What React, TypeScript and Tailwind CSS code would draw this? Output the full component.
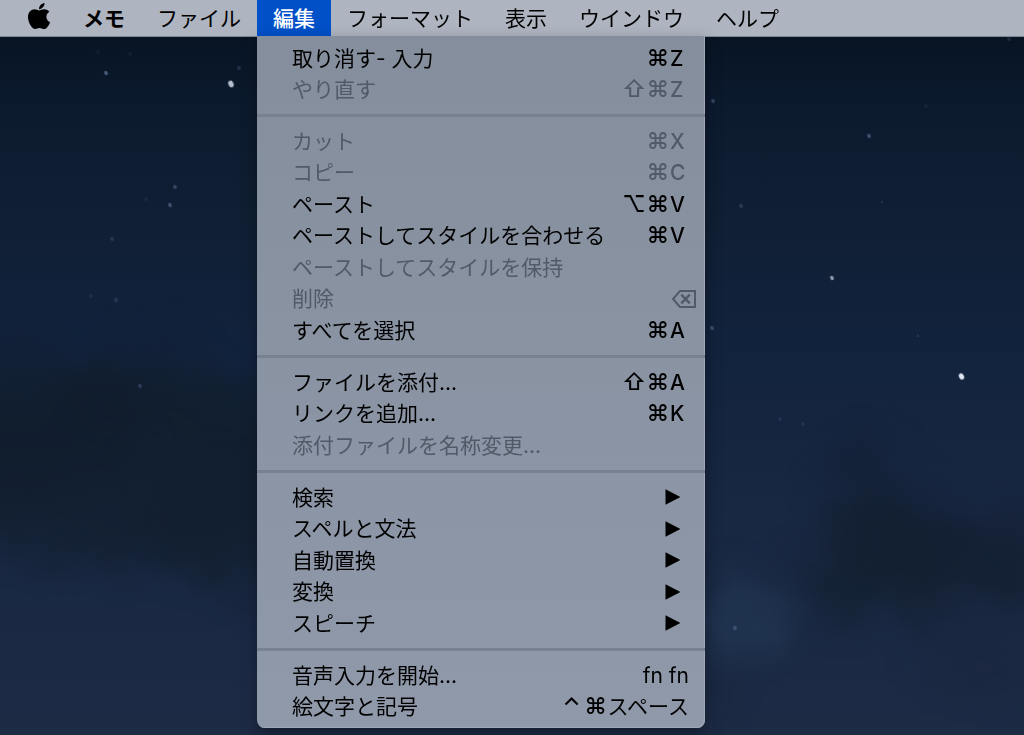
import { FaApple } from "react-icons/fa";

type MenuEntry = {
  label: string;
  keys?: string[];
  keyText?: string;
  disabled?: boolean;
  submenu?: boolean;
  erase?: boolean;
};

const groups: MenuEntry[][] = [
  [
    { label: "取り消す- 入力", keys: ["⌘", "Z"] },
    { label: "やり直す", keys: ["⇧", "⌘", "Z"], disabled: true },
  ],
  [
    { label: "カット", keys: ["⌘", "X"], disabled: true },
    { label: "コピー", keys: ["⌘", "C"], disabled: true },
    { label: "ペースト", keys: ["⌥", "⌘", "V"] },
    { label: "ペーストしてスタイルを合わせる", keys: ["⌘", "V"] },
    { label: "ペーストしてスタイルを保持", disabled: true },
    { label: "削除", erase: true, disabled: true },
    { label: "すべてを選択", keys: ["⌘", "A"] },
  ],
  [
    { label: "ファイルを添付...", keys: ["⇧", "⌘", "A"] },
    { label: "リンクを追加...", keys: ["⌘", "K"] },
    { label: "添付ファイルを名称変更...", disabled: true },
  ],
  [
    { label: "検索", submenu: true },
    { label: "スペルと文法", submenu: true },
    { label: "自動置換", submenu: true },
    { label: "変換", submenu: true },
    { label: "スピーチ", submenu: true },
  ],
  [
    { label: "音声入力を開始...", keyText: "fn fn" },
    { label: "絵文字と記号", keys: ["⌃", "⌘"], keyText: "スペース" },
  ],
];

const barItems = ["メモ", "ファイル", "編集", "フォーマット", "表示", "ウインドウ", "ヘルプ"];

// x, y, radius, opacity
const stars: [number, number, number, number][] = [
  [106, 73, 2, 0.5],
  [231, 84, 3, 0.85],
  [239, 68, 2, 0.2],
  [98, 52, 2, 0.06],
  [130, 54, 2, 0.06],
  [175, 187, 2, 0.3],
  [170, 205, 2, 0.4],
  [146, 199, 2, 0.08],
  [112, 239, 2, 0.18],
  [91, 296, 2, 0.1],
  [116, 300, 2, 0.18],
  [140, 386, 2, 0.25],
  [713, 101, 2, 0.3],
  [869, 136, 2, 0.4],
  [1009, 39, 2, 0.15],
  [926, 106, 2, 0.07],
  [741, 206, 2, 0.22],
  [882, 202, 1, 0.2],
  [832, 278, 2, 0.7],
  [712, 328, 2, 0.35],
  [918, 336, 1, 0.25],
  [780, 419, 2, 0.12],
  [803, 424, 2, 0.12],
  [735, 628, 2, 0.3],
];

// x, y, horizontal radius, vertical radius, opacity
const clouds: [number, number, number, number, number][] = [
  [10, 420, 130, 80, 0.4],
  [140, 385, 75, 45, 0.35],
  [130, 470, 220, 95, 0.6],
  [250, 500, 100, 100, 0.35],
  [863, 468, 32, 28, 0.45],
  [880, 545, 72, 50, 0.45],
  [905, 520, 50, 34, 0.3],
  [1000, 550, 60, 45, 0.4],
  [930, 580, 120, 45, 0.35],
  [850, 605, 45, 22, 0.2],
  [985, 670, 60, 26, 0.15],
  [715, 700, 22, 16, 0.25],
];

function NightSky() {
  return (
    <svg
      className="absolute inset-0 h-full w-full"
      viewBox="0 0 1024 735"
      preserveAspectRatio="xMinYMin slice"
      aria-hidden="true"
    >
      <defs>
        <linearGradient id="sky" x1="0" y1="0" x2="0" y2="1">
          <stop offset="0.05" stopColor="#081424" />
          <stop offset="0.14" stopColor="#0c1a2e" />
          <stop offset="0.3" stopColor="#101f34" />
          <stop offset="0.48" stopColor="#12233d" />
          <stop offset="0.7" stopColor="#182742" />
          <stop offset="1" stopColor="#1d2b45" />
        </linearGradient>
        <filter
          id="haze"
          x="-200"
          y="0"
          width="1500"
          height="900"
          filterUnits="userSpaceOnUse"
          colorInterpolationFilters="sRGB"
        >
          <feGaussianBlur stdDeviation="16" result="soft" />
          <feTurbulence type="fractalNoise" baseFrequency="0.02" numOctaves="4" seed="7" />
          <feDisplacementMap in="soft" scale="50" xChannelSelector="R" yChannelSelector="G" />
          <feGaussianBlur stdDeviation="3" />
        </filter>
        <filter id="twinkle" x="-50%" y="-50%" width="200%" height="200%">
          <feGaussianBlur stdDeviation="0.4" />
        </filter>
      </defs>
      <rect width="1024" height="735" fill="url(#sky)" />
      <g filter="url(#haze)">
        <ellipse cx="745" cy="615" rx="45" ry="38" fill="#25405f" opacity="0.4" />
        {clouds.map(([x, y, rx, ry, o]) => (
          <ellipse key={`${x}-${y}`} cx={x} cy={y} rx={rx} ry={ry} fill="#111c2a" opacity={o} />
        ))}
      </g>
      {stars.map(([x, y, r, o]) => (
        <ellipse
          key={`${x}-${y}`}
          cx={x}
          cy={y}
          rx={r * 0.85}
          ry={r * 1.15}
          fill={o > 0.6 ? "#d3dbe8" : "#93a9dc"}
          opacity={o}
          transform={`rotate(-25 ${x} ${y})`}
          filter="url(#twinkle)"
        />
      ))}
      <ellipse cx="961.5" cy="376.5" rx="2.4" ry="3.2" fill="#e2e6f0" transform="rotate(-28 961.5 376.5)" />
    </svg>
  );
}

function Shortcut({ entry }: { entry: MenuEntry }) {
  if (entry.submenu) {
    return (
      <svg className="mr-4 h-4 w-4" viewBox="0 0 16 16" fill="currentColor" aria-hidden="true">
        <path d="M0.5 0.2 15.4 8 0.5 15.8Z" />
      </svg>
    );
  }
  if (entry.erase) {
    return (
      <svg className="h-5 w-[26px]" viewBox="0 0 26 20" fill="none" stroke="currentColor" strokeWidth="2" aria-hidden="true">
        <path d="M9 2H24V18H9L2 10Z" />
        <path d="M10.3 5.6 18.8 14.4M18.8 5.6 10.3 14.4" strokeWidth="2.4" />
      </svg>
    );
  }
  if (!entry.keys && !entry.keyText) return null;
  return (
    <span className="flex items-center font-medium">
      {entry.keys?.map((key, i) =>
        /[A-Z]/.test(key) ? (
          <span key={i} className="w-[27px]">{key}</span>
        ) : (
          <span key={i} className="w-6 text-center text-[23px]">{key}</span>
        ),
      )}
      {entry.keyText && <span className="mr-2 font-normal">{entry.keyText}</span>}
    </span>
  );
}

function EditMenu() {
  return (
    <div
      role="menu"
      aria-label="編集"
      className="absolute top-full left-0 w-[448px] rounded-b-lg bg-linear-to-b from-[#858e9c] to-[#8f99aa] pt-[6px] pb-[6px] shadow-[inset_-1px_-1px_0_#a0a8b5,0_6px_16px_rgba(0,0,0,0.35)]"
    >
      {groups.map((group, g) => (
        <div key={g} role="group">
          {g > 0 && <div role="separator" className="mt-[9px] mb-2 h-[3px] bg-[#778190]" />}
          {group.map((entry, i) => (
            <button
              key={entry.label}
              type="button"
              role="menuitem"
              disabled={entry.disabled}
              className={`flex w-full items-center justify-between pr-2 pl-[35px] text-left whitespace-nowrap ${
                i % 2 === 0 ? "h-8" : "h-[31px]"
              } ${entry.disabled ? "text-[#505a69]" : "text-black"}`}
            >
              <span>{entry.label}</span>
              <Shortcut entry={entry} />
            </button>
          ))}
        </div>
      ))}
    </div>
  );
}

export default function App() {
  return (
    <div className="relative min-h-screen overflow-hidden bg-[#101f34] font-['Inter','Noto_Sans_CJK_JP',sans-serif] text-[21px] leading-[31px] text-black">
      <NightSky />
      <nav role="menubar" aria-label="メニューバー" className="relative flex h-[37px] border-b border-[#7d8693] bg-[#aeb4c0]">
        <button type="button" role="menuitem" aria-label="アップルメニュー" className="flex w-[67px] items-center pb-1 pl-[25px]">
          <FaApple className="h-[30px] w-7" />
        </button>
        {barItems.map((item) => {
          const open = item === "編集";
          return (
            <div key={item} className="relative">
              <button
                type="button"
                role="menuitem"
                aria-haspopup="menu"
                aria-expanded={open}
                className={`flex h-full items-center px-4 whitespace-nowrap ${
                  open ? "bg-[#0050c8] font-medium text-white" : ""
                } ${item === "メモ" ? "font-bold" : ""}`}
              >
                {item}
              </button>
              {open && <EditMenu />}
            </div>
          );
        })}
      </nav>
    </div>
  );
}
